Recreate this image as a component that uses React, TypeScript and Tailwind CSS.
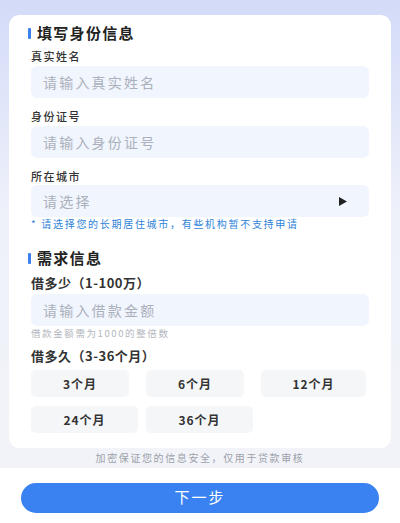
import { ReactNode } from 'react';

const font = { fontFamily: '"Noto Sans CJK SC", "Noto Sans", sans-serif' };

function SectionTitle({ children, className }: { children: ReactNode; className?: string }) {
  return (
    <div className={`-ml-[3px] flex h-[20px] items-center gap-[6px] ${className ?? ''}`}>
      <span className="h-[11px] w-[3px] rounded-[1px] bg-[#3b80f0]" />
      <span className="text-[15px] font-bold leading-[20px] tracking-[1.3px] text-[#222]">{children}</span>
    </div>
  );
}

function Field({ placeholder, right }: { placeholder: string; right?: ReactNode }) {
  return (
    <div className="flex h-[32px] items-center justify-between rounded-[6px] bg-[#f1f5fd] pl-[12px] pr-[22px]">
      <span className="text-[14px] tracking-[2.2px] text-[#abb1bc]">{placeholder}</span>
      {right}
    </div>
  );
}

function Term({ label, w }: { label: string; w: string }) {
  return (
    <div
      className={`flex h-[27px] items-center justify-center rounded-[5px] bg-[#f5f6f8] text-[12px] font-semibold tracking-[1px] text-[#333] ${w}`}
    >
      {label}
    </div>
  );
}

export default function App() {
  return (
    <div
      style={font}
      className="flex h-[523px] w-[400px] flex-col overflow-hidden bg-gradient-to-b from-[#d3dbf8] via-[#eef1fa] via-40% to-[#f3f4f8]"
    >
      <div className="px-[9px] pt-[15px]">
        <div className="rounded-[10px] bg-white px-[22px] pb-[15px] pt-[8px]">
          <SectionTitle>填写身份信息</SectionTitle>

          <div className="mt-[5px] mb-[2px] text-[11px] font-medium leading-[16px] tracking-[1.5px] text-[#333]">真实姓名</div>
          <Field placeholder="请输入真实姓名" />

          <div className="mt-[10px] mb-[2px] text-[11px] font-medium leading-[16px] tracking-[1.5px] text-[#333]">身份证号</div>
          <Field placeholder="请输入身份证号" />

          <div className="mt-[10px] mb-[1px] text-[11px] font-medium leading-[16px] tracking-[1.5px] text-[#333]">所在城市</div>
          <Field
            placeholder="请选择"
            right={
              <svg width="8" height="9" viewBox="0 0 8 9">
                <path d="M0 0 L8 4.5 L0 9 Z" fill="#222" />
              </svg>
            }
          />
          <div className="text-[10px] leading-[14px] tracking-[1.7px] text-[#2e83d8]">* 请选择您的长期居住城市，有些机构暂不支持申请</div>

          <SectionTitle className="mt-[17px]">需求信息</SectionTitle>

          <div className="mt-[6px] mb-[2px] text-[13px] font-bold leading-[18px] tracking-[0.5px] text-[#333]">借多少（1-100万）</div>
          <Field placeholder="请输入借款金额" />
          <div className="text-[9.5px] leading-[14px] tracking-[1.6px] text-[#b2b6be]">借款金额需为1000的整倍数</div>

          <div className="mt-[7px] text-[13px] font-bold leading-[18px] tracking-[0.5px] text-[#333]">借多久（3-36个月）</div>
          <div className="mt-[5px] flex gap-x-[17px]">
            <Term label="3个月" w="w-[98px]" />
            <Term label="6个月" w="w-[98px]" />
            <Term label="12个月" w="w-[105px]" />
          </div>
          <div className="mt-[9px] flex gap-x-[8px]">
            <Term label="24个月" w="w-[107px]" />
            <Term label="36个月" w="w-[107px]" />
          </div>
        </div>
      </div>

      <div className="flex h-[20px] items-center justify-center text-[10px] tracking-[1.6px] text-[#9ca1aa]">
        加密保证您的信息安全，仅用于贷款审核
      </div>

      <div className="mt-auto h-[56px] bg-white px-[21px] pt-[15px]">
        <button className="flex h-[30px] w-full items-center justify-center rounded-full bg-[#3a82f2] text-[15px] tracking-[2px] text-white">
          下一步
        </button>
      </div>
    </div>
  );
}
